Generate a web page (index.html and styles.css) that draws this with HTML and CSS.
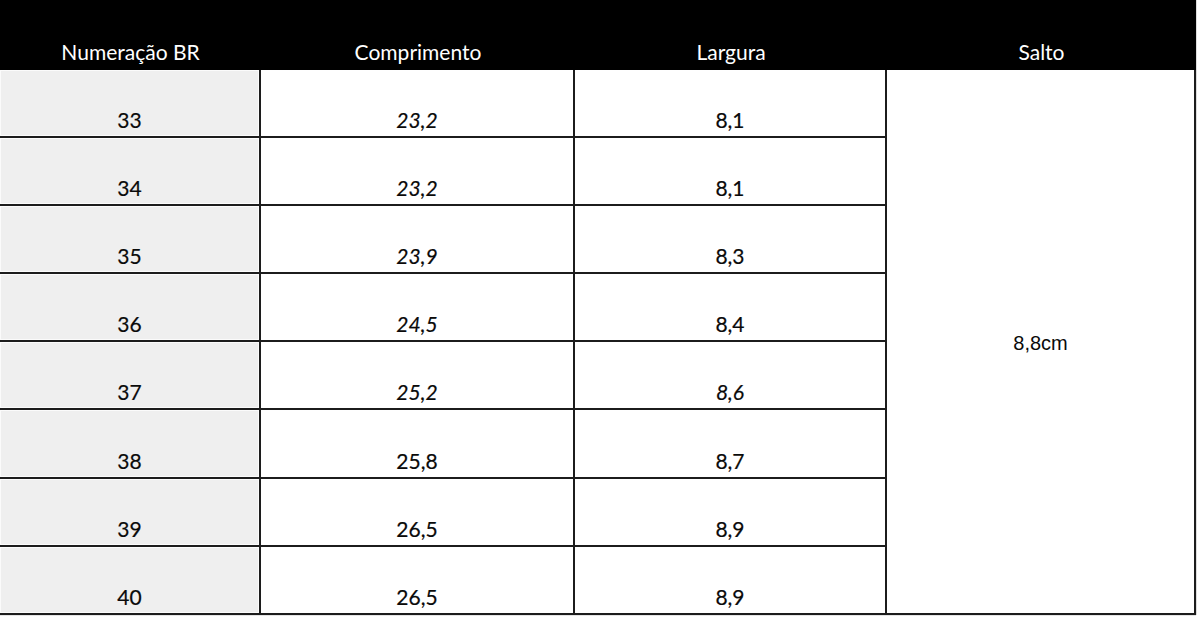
FILE: index.html
```html
<!DOCTYPE html>
<html lang="pt-BR">
<head>
<meta charset="utf-8">
<title>Tabela de medidas</title>
<link rel="stylesheet" href="styles.css">
</head>
<body>
<div class="sheet">
  <div class="grid">
    <div class="hd">Numeração BR</div>
    <div class="hd">Comprimento</div>
    <div class="hd">Largura</div>
    <div class="hd">Salto</div>

    <div class="c num">33</div><div class="c"><i>23,2</i></div><div class="c">8,1</div>
    <div class="c salto">8,8cm</div>
    <div class="c num">34</div><div class="c"><i>23,2</i></div><div class="c">8,1</div>
    <div class="c num">35</div><div class="c"><i>23,9</i></div><div class="c">8,3</div>
    <div class="c num">36</div><div class="c"><i>24,5</i></div><div class="c">8,4</div>
    <div class="c num">37</div><div class="c"><i>25,2</i></div><div class="c"><i>8,6</i></div>
    <div class="c num">38</div><div class="c">25,8</div><div class="c">8,7</div>
    <div class="c num">39</div><div class="c">26,5</div><div class="c">8,9</div>
    <div class="c num">40</div><div class="c">26,5</div><div class="c">8,9</div>
  </div>
</div>
</body>
</html>
```
FILE: styles.css
```css
html, body {
  margin: 0;
  padding: 0;
  background: #ffffff;
}

.sheet {
  width: 1200px;
  height: 619px;
  overflow: hidden;
  background: #ffffff;
}

.grid {
  display: grid;
  grid-template-columns: 261px 314px 312px 309px;
  grid-template-rows: 70px repeat(8, 68.1px);
  width: 1196px;
  font-family: Lato, "Open Sans", sans-serif;
  font-size: 21px;
  color: #0a0a0a;
  box-shadow: 1px 0 0 #dcdcdc, 0 1px 0 #e4e4e4;
}

.hd {
  background: #000000;
  color: #ffffff;
  display: flex;
  align-items: flex-end;
  justify-content: center;
  padding-bottom: 8px;
  box-sizing: border-box;
  line-height: 1;
}

.c {
  display: flex;
  align-items: flex-end;
  justify-content: center;
  box-sizing: border-box;
  border-right: 2px solid #1c1c1c;
  border-bottom: 2px solid #1c1c1c;
  padding-bottom: 6px;
  line-height: 1;
  background: #ffffff;
  -webkit-text-stroke: 0.2px #0a0a0a;
}

.c i {
  font-style: italic;
}

.num {
  background: #efefef;
  box-shadow: inset 1px 1px 0 #fbfbfb, inset -1px -1px 0 #fbfbfb;
}

.salto {
  grid-column: 4;
  grid-row: 2 / span 8;
  align-items: center;
  padding-bottom: 0;
  padding-top: 4px;
  font-family: "Liberation Sans", Arial, sans-serif;
  font-size: 20px;
  -webkit-text-stroke: 0;
}
```
